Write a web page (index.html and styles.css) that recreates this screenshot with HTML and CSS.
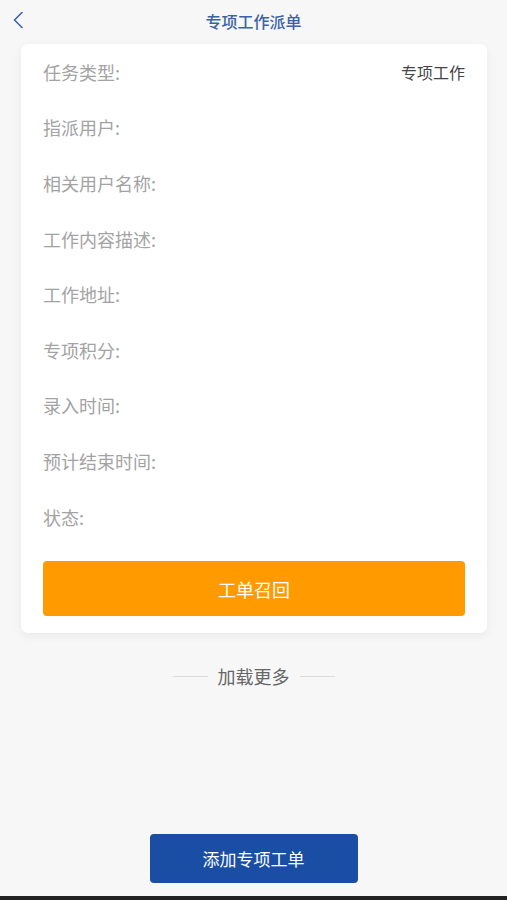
FILE: index.html
```html
<!DOCTYPE html>
<html lang="zh-CN">
<head>
  <meta charset="UTF-8" />
  <meta name="viewport" content="width=device-width, initial-scale=1.0"/>
  <title>专项工作派单</title>
  <link rel="stylesheet" href="styles.css">
</head>
<body>
  <div class="page">
    <header class="nav-bar">
      <span class="back-btn">
        <svg width="12" height="18" viewBox="0 0 12 18">
          <path d="M10 1.5 L2.5 9 L10 16.5" fill="none" stroke="#3b63a8" stroke-width="1.6" stroke-linecap="round" stroke-linejoin="round"/>
        </svg>
      </span>
      <h1 class="nav-title">专项工作派单</h1>
    </header>

    <div class="order-card">
      <div class="info-row">
        <span class="info-label">任务类型:</span>
        <span class="info-value">专项工作</span>
      </div>
      <div class="info-row"><span class="info-label">指派用户:</span></div>
      <div class="info-row"><span class="info-label">相关用户名称:</span></div>
      <div class="info-row"><span class="info-label">工作内容描述:</span></div>
      <div class="info-row"><span class="info-label">工作地址:</span></div>
      <div class="info-row"><span class="info-label">专项积分:</span></div>
      <div class="info-row"><span class="info-label">录入时间:</span></div>
      <div class="info-row"><span class="info-label">预计结束时间:</span></div>
      <div class="info-row"><span class="info-label">状态:</span></div>

      <button class="recall-btn">工单召回</button>
    </div>

    <div class="load-more">
      <span class="load-line"></span>
      <span class="load-text">加载更多</span>
      <span class="load-line"></span>
    </div>

    <div class="footer">
      <button class="add-btn">添加专项工单</button>
    </div>
    <div class="home-bar"></div>
  </div>
</body>
</html>
```

FILE: styles.css
```css
body {
  margin: 0;
  padding: 0;
  background-color: #f7f7f8;
  font-family: "Noto Sans CJK SC", "Noto Sans", sans-serif;
}

.page {
  display: flex;
  flex-direction: column;
  height: 900px;
}

.nav-bar {
  height: 44px;
  display: flex;
  align-items: center;
  justify-content: center;
  position: relative;
}

.back-btn {
  position: absolute;
  left: 12px;
  top: 11px;
  display: flex;
}

.nav-title {
  margin: 0 0 2px;
  font-size: 16px;
  font-weight: 500;
  color: #3b63a8;
}

.order-card {
  margin: 0 20px 0 21px;
  background: #fff;
  border-radius: 7px;
  box-shadow: 0 3px 10px rgba(0, 0, 0, 0.06);
  padding: 0 22px 17px;
}

.info-row {
  height: 55.6px;
  display: flex;
  align-items: center;
  justify-content: space-between;
}

.info-label {
  font-size: 18px;
  color: #a3a3a3;
}

.info-value {
  font-size: 16px;
  color: #444;
}

.recall-btn {
  display: block;
  width: 100%;
  height: 55px;
  margin-top: 17px;
  border: none;
  border-radius: 4px;
  background-color: #ff9a00;
  color: #fff;
  font-family: inherit;
  font-size: 18px;
}

.load-more {
  margin-top: 29px;
  height: 28px;
  display: flex;
  align-items: center;
  justify-content: center;
  gap: 10px;
}

.load-line {
  width: 35px;
  height: 1px;
  background-color: #dcdcdc;
}

.load-text {
  font-size: 18px;
  color: #666;
}

.footer {
  flex: 1;
  display: flex;
  align-items: flex-end;
  justify-content: center;
  padding-bottom: 13px;
}

.add-btn {
  width: 208px;
  height: 49px;
  border: none;
  border-radius: 4px;
  background-color: #1a4ea4;
  color: #fff;
  font-family: inherit;
  font-size: 17px;
}

.home-bar {
  height: 4px;
  background-color: #222;
}
```
